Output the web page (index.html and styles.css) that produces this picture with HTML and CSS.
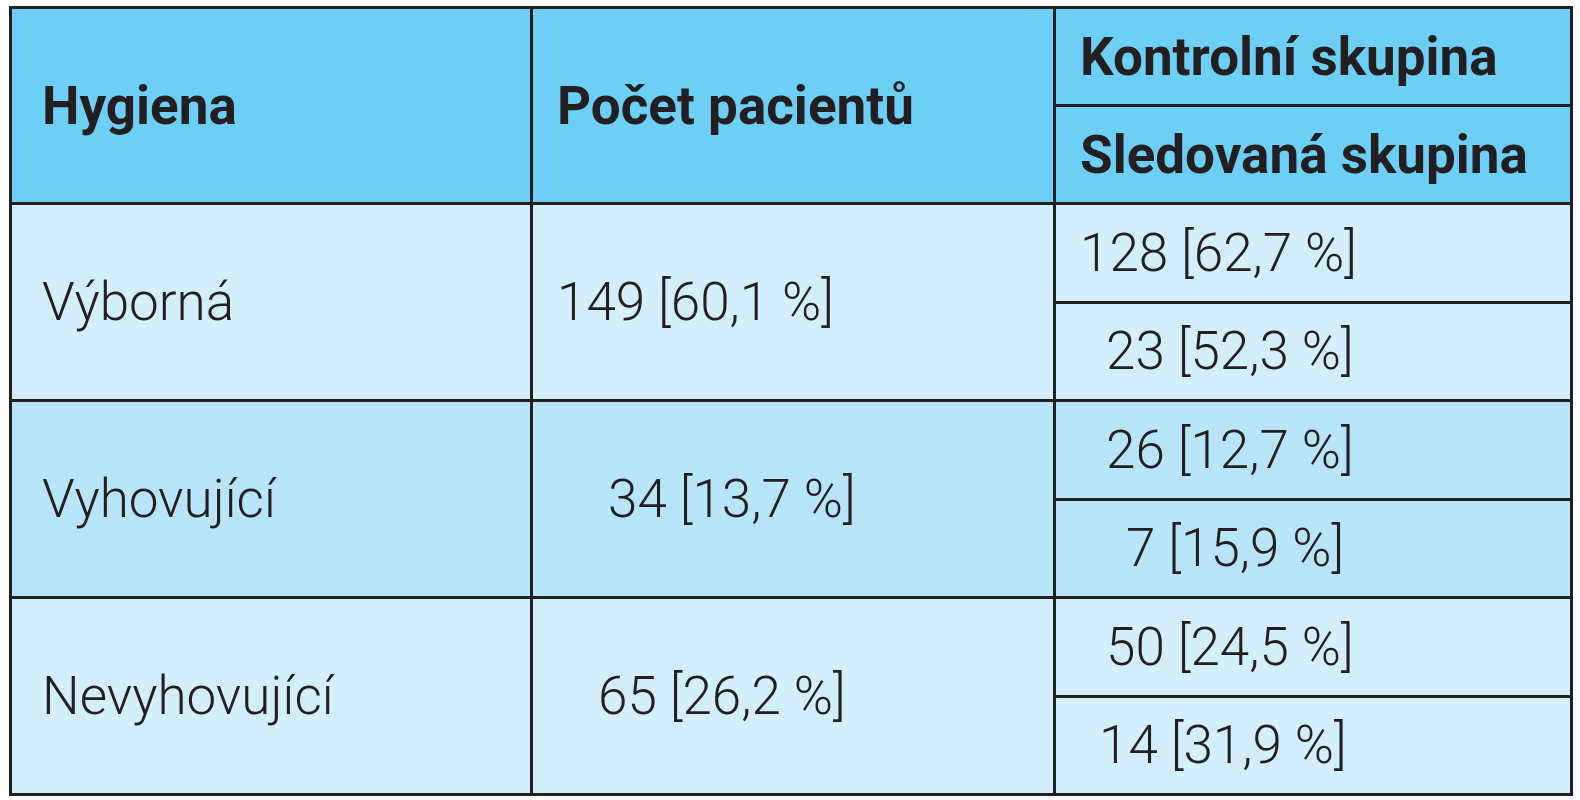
FILE: index.html
```html
<!DOCTYPE html>
<html lang="cs">
<head>
<meta charset="utf-8">
<title>Hygiena</title>
<link rel="stylesheet" href="styles.css">
</head>
<body>
<table class="tbl">
  <colgroup>
    <col class="w1">
    <col class="w2">
    <col class="w3">
  </colgroup>
  <tr class="head">
    <th rowspan="2" class="c1">Hygiena</th>
    <th rowspan="2" class="c2">Počet pacientů</th>
    <th class="c3">Kontrolní skupina</th>
  </tr>
  <tr class="head">
    <th class="c3">Sledovaná skupina</th>
  </tr>
  <tr class="light">
    <td rowspan="2" class="c1">Výborná</td>
    <td rowspan="2" class="c2">149 [60,1 %]</td>
    <td class="c3">128 [62,7 %]</td>
  </tr>
  <tr class="light">
    <td class="c3 i1">23 [52,3 %]</td>
  </tr>
  <tr class="mid">
    <td rowspan="2" class="c1">Vyhovující</td>
    <td rowspan="2" class="c2 i2">34 [13,7 %]</td>
    <td class="c3 i1">26 [12,7 %]</td>
  </tr>
  <tr class="mid">
    <td class="c3 i3">7 [15,9 %]</td>
  </tr>
  <tr class="light">
    <td rowspan="2" class="c1">Nevyhovující</td>
    <td rowspan="2" class="c2 i4">65 [26,2 %]</td>
    <td class="c3 i1">50 [24,5 %]</td>
  </tr>
  <tr class="light">
    <td class="c3 i5">14 [31,9 %]</td>
  </tr>
</table>
</body>
</html>
```

FILE: styles.css
```css
html, body {
  margin: 0;
  padding: 0;
  background: #ffffff;
}
body {
  padding: 6px 0 0 9px;
  font-family: Roboto, "Liberation Sans", sans-serif;
  color: #231f20;
}
.tbl {
  border-collapse: collapse;
  width: 1564px;
  table-layout: fixed;
}
.w1 { width: 521px; }
.w2 { width: 523px; }
.tbl th, .tbl td {
  border: 3px solid #231f20;
  text-align: left;
  vertical-align: middle;
  padding: 0;
  white-space: nowrap;
}
.head {
  height: 98px;
}
.light, .mid {
  height: 98.5px;
}
.tbl th {
  font-weight: 700;
  font-size: 53px;
}
.tbl td {
  font-weight: 300;
  font-size: 53px;
}
.head th { background: #6dcff6; }
.light td { background: #d3effc; }
.mid td { background: #b9e5fa; }
.c1 { padding-left: 30px !important; }
.c2 { padding-left: 24px !important; }
.c3 { padding-left: 24px !important; }
.c3.i1 { padding-left: 50px !important; }
.c3.i3 { padding-left: 70px !important; }
.c3.i5 { padding-left: 43px !important; }
.c2.i2 { padding-left: 75px !important; }
.c2.i4 { padding-left: 65px !important; }
```
